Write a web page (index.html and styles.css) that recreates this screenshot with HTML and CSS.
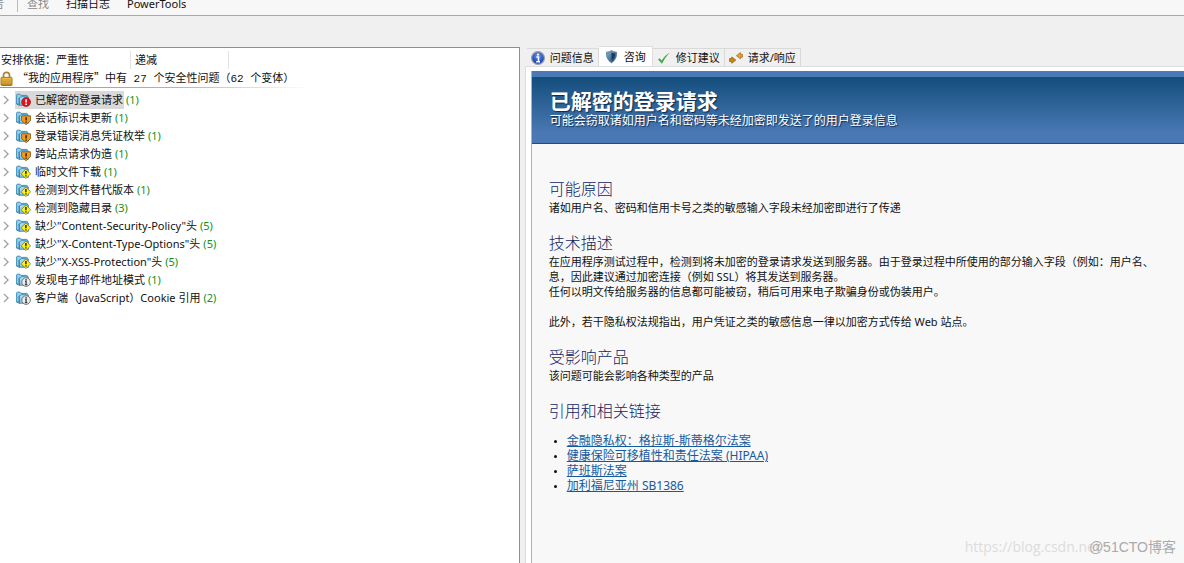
FILE: index.html
```html
<!DOCTYPE html>
<html lang="zh-CN">
<head>
<meta charset="utf-8">
<title>安全性问题</title>
<link rel="stylesheet" href="styles.css">
</head>
<body>
<svg class="defs" aria-hidden="true">
  <defs>
    <linearGradient id="fold" x1="0" y1="0" x2="1" y2="1"><stop offset="0" stop-color="#c4ecfb"/><stop offset="1" stop-color="#4ba3d3"/></linearGradient>
    <linearGradient id="gold" x1="0" y1="0" x2="0" y2="1"><stop offset="0" stop-color="#edbd4b"/><stop offset="1" stop-color="#b8811b"/></linearGradient>
    <linearGradient id="shieldfill" x1="0" y1="0" x2="1" y2="1"><stop offset="0" stop-color="#8eb4d0"/><stop offset="1" stop-color="#133f6a"/></linearGradient>
    <radialGradient id="ball" cx=".5" cy=".35"><stop offset="0" stop-color="#6e9bf0"/><stop offset="1" stop-color="#1c47b4"/></radialGradient>
    <symbol id="folder" viewBox="0 0 15 14">
      <path d="M.6 11V2.2Q.6 1.2 1.6 1.2H4l1 1.2h5.6q.9 0 .9.9V11Z" fill="#8fd0ee" stroke="#3585b1" stroke-width=".9"/>
      <path d="M3.4 12.3 2.8 5.2 6 3.5l6.4.5v8.3Z" fill="url(#fold)" stroke="#3585b1" stroke-width=".8"/>
      <path d="M.6 11 3.4 12.4V5" fill="none" stroke="#2c78a5" stroke-width=".8"/>
    </symbol>
    <symbol id="high" viewBox="0 0 15 14"><use href="#folder" width="15" height="14"/><circle cx="10.1" cy="9.1" r="4.5" fill="#dd1420" stroke="#9d1018" stroke-width=".6"/><path d="M10.1 6.2v3.4M10.1 10.6v1.4" stroke="#fff" stroke-width="1.6"/></symbol>
    <symbol id="medium" viewBox="0 0 15 14"><use href="#folder" width="15" height="14"/><path d="M5.6 4.8h9v4.700l-4.500 4.200-4.500-4.200Z" fill="#f09a23" stroke="#7a5118" stroke-width=".8"/><path d="M10.1 6.200v3.4M10.1 10.500v1.300" stroke="#3b2308" stroke-width="1.5"/></symbol>
    <symbol id="low" viewBox="0 0 15 14"><use href="#folder" width="15" height="14"/><path d="m9.900 4 4.800 4.800-4.800 4.800-4.800-4.800Z" fill="#fff019" stroke="#777111" stroke-width=".7"/><path d="M9.900 6v3.300M9.900 10.200v1.400" stroke="#222" stroke-width="1.5"/></symbol>
    <symbol id="note" viewBox="0 0 15 14"><use href="#folder" width="15" height="14"/><circle cx="10.1" cy="9.1" r="4.3" fill="#eee" stroke="#777" stroke-width="1"/><path d="M10.1 6v1.400M9 8.500h1.100v3.100M8.800 11.600h2.600" fill="none" stroke="#444" stroke-width="1.3"/></symbol>
    <symbol id="chev" viewBox="0 0 6 10"><path d="m1 1 4 4-4 4" fill="none" stroke="#a3a3a3" stroke-width="1.4"/></symbol>
  </defs>
</svg>
<div class="app">
  <nav class="menu">
    <button class="menu-item cut" disabled>告</button>
    <span class="menu-sep"></span>
    <button class="menu-item" disabled>查找</button>
    <button class="menu-item">扫描日志</button>
    <button class="menu-item">PowerTools</button>
  </nav>
  <div class="strip"></div>
  <div class="panes">
    <section class="issues">
      <div class="sort">
        <button class="sort-key">安排依据：严重性</button>
        <button class="sort-dir">递减</button>
      </div>
      <div class="summary">
        <svg class="lock" viewBox="0 0 12 15"><path d="M3 7V4.3a3 3 0 0 1 6 0V7" fill="none" stroke="#a98334" stroke-width="1.7"/><rect x=".5" y="6.3" width="11" height="8.2" rx=".8" fill="url(#gold)" stroke="#a97717"/><path d="M1 9h10M1 11.8h10" stroke="#d9a63a"/></svg>
        <span>“我的应用程序”中有<span class="num"> 27 </span>个安全性问题（<span class="num">62 </span>个变体）</span>
      </div>
      <ul class="tree">
        <li class="node"><svg class="chev"><use href="#chev"/></svg><span class="label selected"><svg class="folder"><use href="#high"/></svg>已解密的登录请求</span><span class="count">(1)</span></li>
        <li class="node"><svg class="chev"><use href="#chev"/></svg><span class="label"><svg class="folder"><use href="#medium"/></svg>会话标识未更新</span><span class="count">(1)</span></li>
        <li class="node"><svg class="chev"><use href="#chev"/></svg><span class="label"><svg class="folder"><use href="#medium"/></svg>登录错误消息凭证枚举</span><span class="count">(1)</span></li>
        <li class="node"><svg class="chev"><use href="#chev"/></svg><span class="label"><svg class="folder"><use href="#medium"/></svg>跨站点请求伪造</span><span class="count">(1)</span></li>
        <li class="node"><svg class="chev"><use href="#chev"/></svg><span class="label"><svg class="folder"><use href="#low"/></svg>临时文件下载</span><span class="count">(1)</span></li>
        <li class="node"><svg class="chev"><use href="#chev"/></svg><span class="label"><svg class="folder"><use href="#low"/></svg>检测到文件替代版本</span><span class="count">(1)</span></li>
        <li class="node"><svg class="chev"><use href="#chev"/></svg><span class="label"><svg class="folder"><use href="#low"/></svg>检测到隐藏目录</span><span class="count">(3)</span></li>
        <li class="node"><svg class="chev"><use href="#chev"/></svg><span class="label"><svg class="folder"><use href="#low"/></svg>缺少"Content-Security-Policy"头</span><span class="count">(5)</span></li>
        <li class="node"><svg class="chev"><use href="#chev"/></svg><span class="label"><svg class="folder"><use href="#low"/></svg>缺少"X-Content-Type-Options"头</span><span class="count">(5)</span></li>
        <li class="node"><svg class="chev"><use href="#chev"/></svg><span class="label"><svg class="folder"><use href="#low"/></svg>缺少"X-XSS-Protection"头</span><span class="count">(5)</span></li>
        <li class="node"><svg class="chev"><use href="#chev"/></svg><span class="label"><svg class="folder"><use href="#note"/></svg>发现电子邮件地址模式</span><span class="count">(1)</span></li>
        <li class="node"><svg class="chev"><use href="#chev"/></svg><span class="label"><svg class="folder"><use href="#note"/></svg>客户端（JavaScript）Cookie 引用</span><span class="count">(2)</span></li>
      </ul>
    </section>
    <section class="detail">
      <div class="tabs" role="tablist">
        <button class="tab" role="tab"><svg class="tab-icon" viewBox="0 0 14 14"><circle cx="7" cy="7" r="6.4" fill="url(#ball)" stroke="#9aa0b0" stroke-width="1.2"/><circle cx="7" cy="3.6" r="1.1" fill="#fff"/><path d="M5.4 6h2.1v4.3M5.2 10.7h3.8" fill="none" stroke="#fff" stroke-width="1.5"/></svg>问题信息</button>
        <button class="tab active" role="tab" aria-selected="true"><svg class="tab-icon" viewBox="0 0 14 14"><path d="M6.500.6q2 1.600 5 1.600.6 7.200-5 10.600Q.9 9.400 1.500 2.200 4.500 2.200 6.500.6Z" fill="url(#shieldfill)" stroke="#5c7f9b" stroke-width=".9"/><path d="M6.500 2.500q1.400.9 3.500 1.100.1 4.800-3.500 7.200Z" fill="#123c66"/></svg>咨询</button>
        <button class="tab" role="tab"><svg class="tab-icon" viewBox="0 0 14 14"><path d="M1 8.500 2.700 7.300 4.600 9.600Q8 4.200 12.800 1.600 8 6.500 5 12.800Z" fill="#45aa4a"/></svg>修订建议</button>
        <button class="tab" role="tab"><svg class="tab-icon" viewBox="0 0 14 14"><path d="M13.400 3.300h-2V1.600L7.400 4.700l4 3.100V6.300h2Z" fill="#e6a32b" stroke="#9c6513" stroke-width=".7"/><path d="M.6 7.500h2.200V5.900l4 3.200-4 3.200v-1.700H.6Z" fill="#c98516" stroke="#8a570e" stroke-width=".7"/></svg>请求/响应</button>
      </div>
      <div class="page">
        <article class="advisory">
          <header class="banner">
            <h1 class="title">已解密的登录请求</h1>
            <p class="subtitle">可能会窃取诸如用户名和密码等未经加密即发送了的用户登录信息</p>
          </header>
          <div class="content">
            <section class="block"><h2 class="heading">可能原因</h2>
              <p class="text">诸如用户名、密码和信用卡号之类的敏感输入字段未经加密即进行了传递</p></section>
            <section class="block"><h2 class="heading">技术描述</h2>
              <p class="text">在应用程序测试过程中，检测到将未加密的登录请求发送到服务器。由于登录过程中所使用的部分输入字段（例如：用户名、<br>息，因此建议通过加密连接（例如 SSL）将其发送到服务器。<br>任何以明文传给服务器的信息都可能被窃，稍后可用来电子欺骗身份或伪装用户。</p>
              <p class="text para">此外，若干隐私权法规指出，用户凭证之类的敏感信息一律以加密方式传给 Web 站点。</p></section>
            <section class="block"><h2 class="heading">受影响产品</h2>
              <p class="text">该问题可能会影响各种类型的产品</p></section>
            <section class="block"><h2 class="heading">引用和相关链接</h2>
              <ul class="links">
                <li><a href="#glba">金融隐私权：格拉斯-斯蒂格尔法案</a></li>
                <li><a href="#hipaa">健康保险可移植性和责任法案 (HIPAA)</a></li>
                <li><a href="#sox">萨班斯法案</a></li>
                <li><a href="#sb1386">加利福尼亚州 SB1386</a></li>
              </ul></section>
          </div>
        </article>
      </div>
    </section>
  </div>
  <div class="watermark url">https://blog.csdn.net/</div>
  <div class="watermark brand">@51CTO博客</div>
</div>
</body>
</html>
```
FILE: styles.css
```css
* { box-sizing: border-box; }
body {
  margin: 0;
  background: #f0f0f0;
  color: #111;
  font: 11px/16px "Noto Sans", "Noto Sans CJK SC", sans-serif;
}
h1, h2, p, ul { margin: 0; padding: 0; }
ul { list-style: none; }
button {
  padding: 0;
  border: 0;
  background: none;
  color: inherit;
  font: inherit;
  white-space: nowrap;
}
.defs { position: absolute; width: 0; height: 0; }
.app {
  position: relative;
  display: flex;
  flex-direction: column;
  height: 100vh;
  overflow: hidden;
}
.menu {
  display: flex;
  align-items: flex-end;
  gap: 17px;
  height: 16px;
  padding-bottom: 3px;
  overflow: hidden;
  border-bottom: 1px solid #a8a8a8;
  background: #f7f7f7;
  flex: none;
}
.menu-item:disabled { color: #888; }
.cut { width: 4px; display: flex; justify-content: flex-end; }
.menu-sep { width: 1px; height: 12px; margin: 0 -8px 0 -4px; background: #bbb; }
.strip { height: 31px; flex: none; }
.panes { display: flex; flex: 1; min-height: 0; }
.issues {
  width: 43.9%;
  flex: none;
  border: solid #8c8f96;
  border-width: 1px 1px 0 0;
  background: #fff;
}
.sort { display: flex; height: 21px; align-items: center; padding-top: 2px; }
.sort button { height: 18px; border-right: 1px solid #e2e2e2; text-align: left; }
.sort-key { width: 131px; padding-left: 1px; }
.sort-dir { width: 98px; padding-left: 4px; }
.summary {
  display: flex;
  align-items: center;
  gap: 4px;
  height: 19px;
  font-family: "Noto Sans CJK SC", sans-serif;
  white-space: nowrap;
  border-bottom: 1px solid;
  border-image: linear-gradient(90deg, #5b9bf5, #8fbcf8 35%, #fff 60%) 1;
}
.num { font-family: "Liberation Mono", monospace; white-space: pre; }
.lock { width: 13px; height: 15px; }
.tree { padding-top: 3px; }
.node { display: flex; align-items: center; height: 18px; padding-left: 3px; white-space: nowrap; }
.chev { width: 6px; height: 10px; margin-right: 6px; }
.label { display: flex; align-items: center; height: 18px; padding: 0 1px; }
.selected { background: #d9d9d9; }
.folder { width: 15px; height: 14px; margin-right: 4px; }
.count { margin-left: 2px; color: #159015; }
.detail { flex: 1; min-width: 0; display: flex; flex-direction: column; padding-left: 5px; }
.tabs { display: flex; align-items: flex-end; height: 19px; padding-left: 2px; flex: none; }
.tab {
  display: flex;
  align-items: center;
  gap: 5px;
  height: 18px;
  padding: 0 4px;
  border: solid #d9d9d9;
  border-width: 1px 1px 0 0;
}
.active { height: 20px; padding: 0 6px; background: #fff; border-color: #ddd; }
.tab-icon { width: 14px; height: 14px; }
.page {
  display: flex;
  flex: 1;
  min-height: 0;
  padding: 4px 0 0 5px;
  border: solid #ddd;
  border-width: 1px 0 0 1px;
  background: #fff;
}
.advisory { flex: 1; min-width: 0; overflow: hidden; border-left: 1px solid #9fb4cd; background: #f8f8f8; }
.banner {
  height: 73px;
  padding: 12px 18px 0;
  border-top: 6px solid #4a7ab4;
  border-bottom: 1px solid #1b4f83;
  background: linear-gradient(#134e7c, #4a78b4 85%);
  color: #fff;
  text-shadow: 1px 1px 1px #0a2c4e;
  white-space: nowrap;
}
.title { font-size: 21px; line-height: 24px; font-weight: bold; }
.subtitle { font-size: 12px; line-height: 16px; }
.content { padding: 34px 0 0 17px; white-space: nowrap; }
.block { padding-bottom: 17px; }
.heading { color: #102664; font-size: 16px; line-height: 22px; font-weight: 300; }
.text { line-height: 15px; }
.para { padding-top: 15px; }
.links { padding: 11px 0 0 18px; font-size: 12px; line-height: 15px; }
.links li { list-style: disc; }
.links li::marker { font-size: 8px; }
.links a { color: #165a9e; }
.watermark { position: absolute; white-space: nowrap; line-height: 20px; bottom: 6px; }
.url { right: 79px; color: #dcdcdc; font-family: "Open Sans", sans-serif; font-size: 14px; }
.brand { right: 8px; color: #aaa; font-family: "Liberation Sans", "Noto Sans CJK SC", sans-serif; font-size: 14px; }
```
